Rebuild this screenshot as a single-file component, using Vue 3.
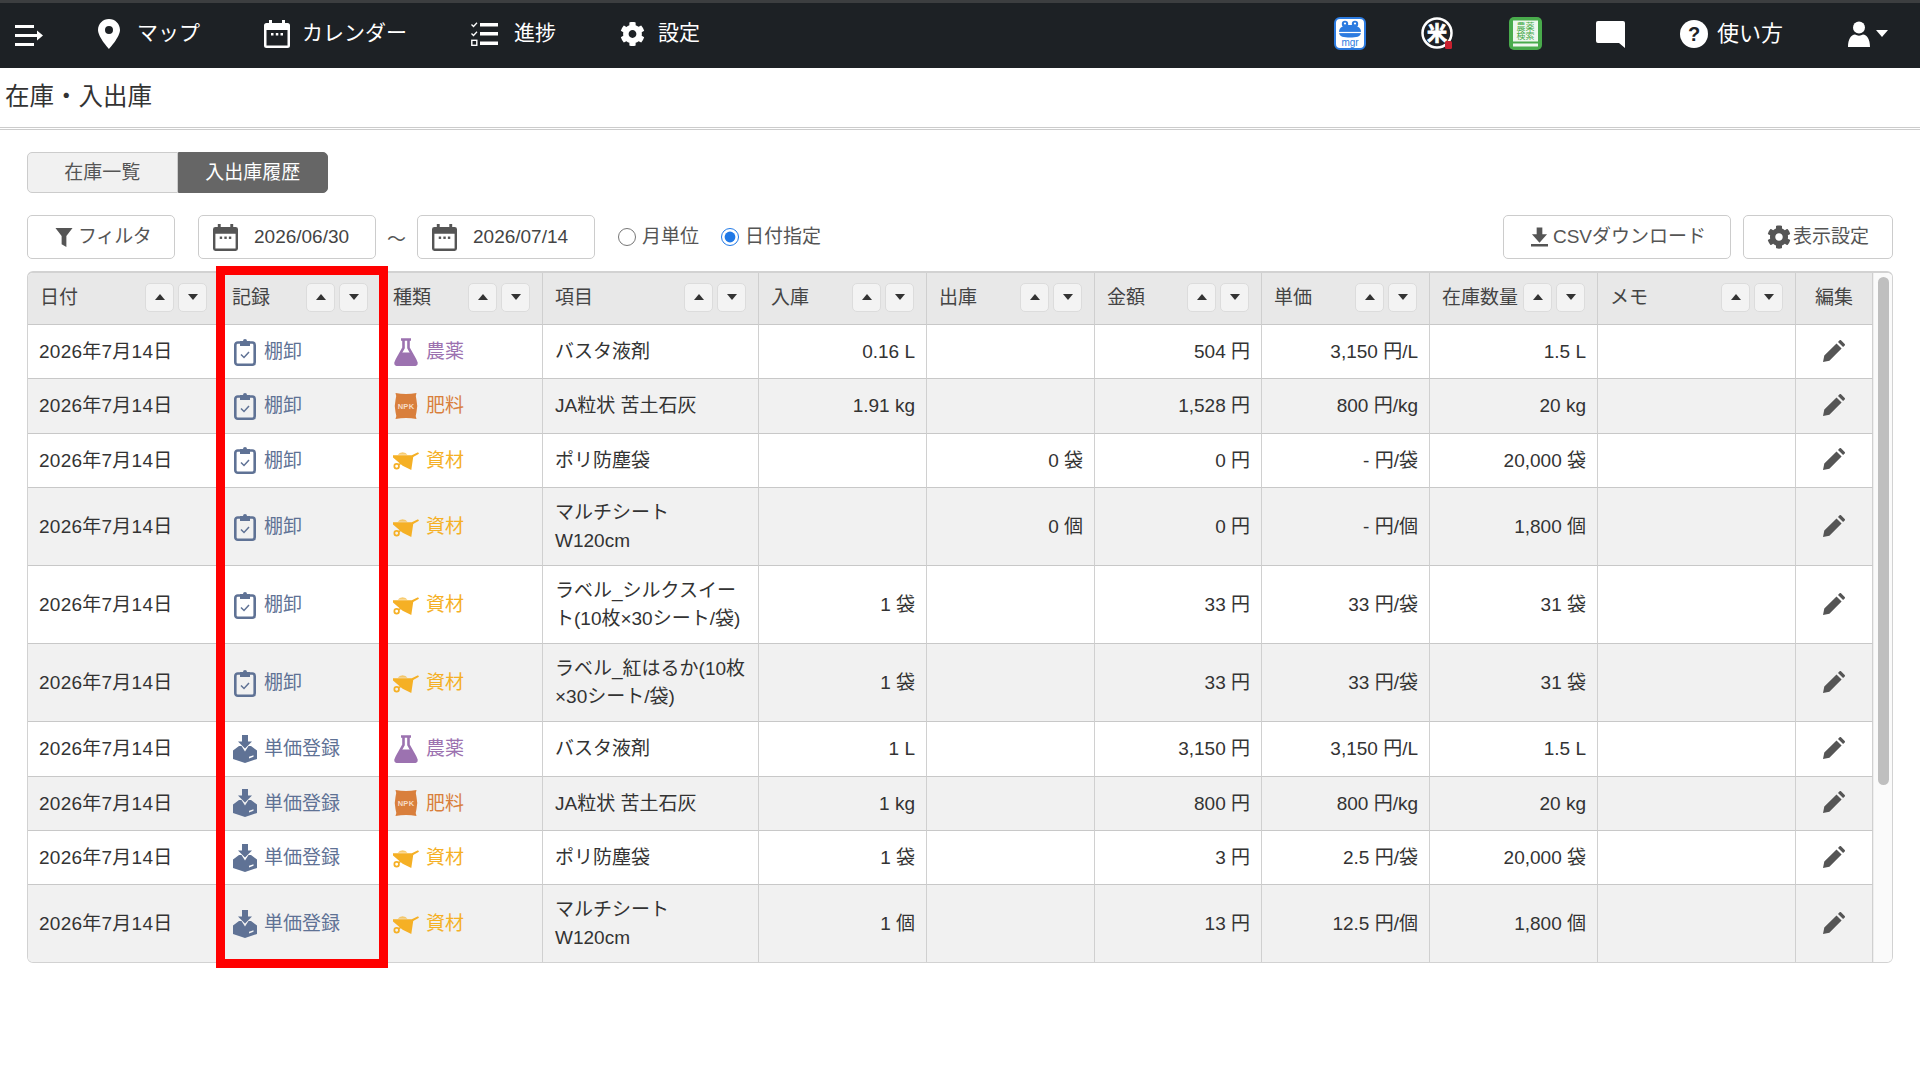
<template>
  <div class="page">
    <!-- shared icons -->
    <svg class="defs" aria-hidden="true">
      <symbol id="i-gear" viewBox="0 0 512 512">
        <path fill="currentColor" d="M487.4 315.7l-42.6-24.6c4.3-23.2 4.3-47 0-70.2l42.6-24.6c4.9-2.8 7.1-8.6 5.5-14-11.1-35.6-30-67.8-54.7-94.6-3.8-4.1-10-5.1-14.8-2.3L380.8 110c-17.9-15.4-38.5-27.3-60.8-35.1V25.8c0-5.6-3.9-10.5-9.4-11.7-36.7-8.2-74.3-7.8-109.2 0-5.5 1.2-9.4 6.1-9.4 11.7V75c-22.2 7.9-42.8 19.8-60.8 35.1L88.7 85.5c-4.9-2.8-11-1.9-14.8 2.3-24.7 26.7-43.6 58.9-54.7 94.6-1.7 5.4.6 11.2 5.5 14L67.3 221c-4.3 23.2-4.3 47 0 70.2l-42.6 24.6c-4.9 2.8-7.1 8.6-5.5 14 11.1 35.6 30 67.8 54.7 94.6 3.8 4.1 10 5.1 14.8 2.3l42.6-24.6c17.9 15.4 38.5 27.3 60.8 35.1v49.2c0 5.6 3.9 10.5 9.4 11.7 36.7 8.2 74.3 7.8 109.2 0 5.5-1.2 9.4-6.1 9.4-11.7v-49.2c22.2-7.9 42.8-19.8 60.8-35.1l42.6 24.6c4.9 2.8 11 1.9 14.8-2.3 24.7-26.7 43.6-58.9 54.7-94.6 1.5-5.5-.7-11.3-5.6-14.1zM256 336c-44.1 0-80-35.9-80-80s35.9-80 80-80 80 35.9 80 80-35.9 80-80 80z" />
      </symbol>
      <symbol id="i-cal" viewBox="0 0 26 28">
        <path fill="currentColor" d="M5 0h3v3h10V0h3v3h2.500A2.500 2.500 0 0 1 26 5.500V25.500A2.500 2.500 0 0 1 23.500 28H2.500A2.500 2.500 0 0 1 0 25.500V5.500A2.500 2.500 0 0 1 2.500 3H5zM2.500 10v15.500h21V10z" fill-rule="evenodd" />
        <rect fill="currentColor" x="7" y="13" width="2.500" height="2.500" />
        <rect fill="currentColor" x="11.800" y="13" width="2.500" height="2.500" />
        <rect fill="currentColor" x="16.500" y="13" width="2.500" height="2.500" />
      </symbol>
      <symbol id="i-clip" viewBox="0 0 22 28">
        <rect x="1.300" y="4.500" width="19.400" height="22.200" rx="2.500" fill="none" stroke="currentColor" stroke-width="2.600" />
        <path fill="currentColor" d="M6 3h3a2 2 0 0 1 4 0h3v5H6z" />
        <path d="M7 16.500l3 3 5-5.500" fill="none" stroke="currentColor" stroke-width="1.500" />
      </symbol>
      <symbol id="i-inbox" viewBox="0 0 24 28">
        <path fill="currentColor" d="M9 0h6v6.500h4L12 13.500 5 6.500h4z" />
        <path fill="currentColor" fill-rule="evenodd" d="M0 15.500L6 11h2.500L12 16.500 15.500 11H18l6 4.500V24l-12 4-12-4zM16 21.800l4.500-1.600v1.600L16 23.400z" />
      </symbol>
      <symbol id="i-flask" viewBox="0 0 24 28">
        <path d="M7 1.500h10M9.500 1.500V10L2.500 22.500A2.500 2.500 0 0 0 4.700 26.500H19.300A2.500 2.500 0 0 0 21.500 22.500L14.500 10V1.500" fill="none" stroke="currentColor" stroke-width="2.600" />
        <path fill="currentColor" d="M7.500 14.500h9l7 10a2.500 2.500 0 0 1-2 3.500H2.500a2.500 2.500 0 0 1-2-3.500z" />
      </symbol>
      <symbol id="i-bag" viewBox="0 0 23 28">
        <path fill="currentColor" d="M1 1Q11.500 3 22 1Q20.500 4 22 8Q23.500 14 22 20Q20.500 24 22 27Q11.500 25 1 27Q2.500 24 1 20Q-.5 14 1 8Q2.500 4 1 1z" />
        <text x="11.500" y="16.500" text-anchor="middle" class="npk">NPK</text>
      </symbol>
      <symbol id="i-barrow" viewBox="0 0 27 21">
        <path fill="currentColor" d="M0 5.500H19.500L26 2.500l1 1.500-6 3.500L19 21 10 16.500 0 8z" />
        <path fill="currentColor" opacity=".65" d="M5 5a5.500 4.500 0 0 1 10 0z" />
        <circle cx="3.800" cy="17" r="2.400" fill="none" stroke="currentColor" stroke-width="1.800" />
        <path d="M5.500 15.500l4.500-2.500" stroke="currentColor" stroke-width="1.600" />
      </symbol>
      <symbol id="i-pencil" viewBox="0 0 22 22">
        <path fill="currentColor" d="M0 22l1.300-6.400L13.500 3.400l5.100 5.100L6.400 20.700zM15 1.900L16.600.3a1 1 0 0 1 1.400 0l3.700 3.700a1 1 0 0 1 0 1.400L20.100 7z" />
      </symbol>
    </svg>

    <header class="navbar">
      <div class="nav-left">
        <svg class="hamburger" width="28" height="22" viewBox="0 0 28 22">
          <path fill="#fff" d="M0 0h19v3H0zM0 9h22V5.500L28 10.500 22 15.500V12H0zM0 18h19v3H0z" />
        </svg>
        <a v-for="item in navItems" :key="item.label" class="nav-item" :class="item.icon">
          <svg v-if="item.icon === 'pin'" width="22" height="30" viewBox="0 0 22 30">
            <path fill="#fff" fill-rule="evenodd" d="M11 0C4.900 0 0 4.900 0 11c0 7 11 19 11 19s11-12 11-19C22 4.900 17.100 0 11 0zm0 7a4 4 0 1 1 0 8 4 4 0 0 1 0-8z" />
          </svg>
          <svg v-else-if="item.icon === 'cal'" width="26" height="28"><use href="#i-cal" /></svg>
          <svg v-else-if="item.icon === 'list'" width="27" height="24" viewBox="0 0 27 24">
            <path fill="#fff" d="M9 1h18v3.500H9zM9 10h18v3.500H9zM9 19.500h18V23H9z" />
            <path d="M.5 2.500l2 2L6 .8M.5 11.500l2 2L6 9.800" fill="none" stroke="#fff" stroke-width="1.300" />
            <rect x=".8" y="18.300" width="5" height="5" fill="none" stroke="#fff" stroke-width="1.400" />
          </svg>
          <svg v-else width="25" height="26" class="gear-w"><use href="#i-gear" /></svg>
          <span>{{ item.label }}</span>
        </a>
      </div>

      <div class="nav-right">
        <svg class="app-mgr" width="32" height="33" viewBox="0 0 32 33">
          <rect x="1" y="1" width="30" height="31" rx="5" fill="#fff" stroke="#2c7be0" stroke-width="2" />
          <circle cx="11" cy="7" r="3.200" fill="#2c7be0" />
          <circle cx="21" cy="7" r="3.200" fill="#2c7be0" />
          <circle cx="11" cy="6.500" r="1.100" fill="#fff" />
          <circle cx="21" cy="6.500" r="1.100" fill="#fff" />
          <path fill="#2c7be0" d="M5 15c0-5 5-7 11-7s11 2 11 7-5 5.500-11 5.500S5 20 5 15z" />
          <path stroke="#fff" stroke-width="1.200" d="M5 15.500h22" />
          <text x="16" y="29" text-anchor="middle" class="mgr-text">mgr</text>
        </svg>
        <svg class="app-kome" width="33" height="33" viewBox="0 0 33 33">
          <circle cx="16" cy="16" r="14.500" fill="#1d2125" stroke="#fff" stroke-width="2.500" />
          <text x="16" y="23.500" text-anchor="middle" class="kome-text">米</text>
          <rect x="24" y="24" width="7" height="8" rx="1.500" fill="#c8202f" />
        </svg>
        <svg class="app-book" width="33" height="33" viewBox="0 0 33 33">
          <rect width="33" height="33" rx="5" fill="#49ab4c" />
          <rect x="4" y="3.500" width="25" height="21" fill="#eef7ee" />
          <rect x="4" y="26.500" width="25" height="3" fill="#eef7ee" />
          <text x="16.500" y="12.500" text-anchor="middle" class="book-text">農薬</text>
          <text x="16.500" y="22" text-anchor="middle" class="book-text">検索</text>
        </svg>
        <svg class="app-chat" width="29" height="28" viewBox="0 0 29 28">
          <path fill="#fff" d="M2 1h25a2 2 0 0 1 2 2v25l-6-5H2a2 2 0 0 1-2-2V3a2 2 0 0 1 2-2z" />
        </svg>
        <a class="help">
          <svg width="28" height="28" viewBox="0 0 28 28">
            <circle cx="14" cy="14" r="14" fill="#fff" />
            <text x="14" y="21" text-anchor="middle" class="q-text">?</text>
          </svg>
          <span>使い方</span>
        </a>
        <div class="user">
          <svg width="22" height="26" viewBox="0 0 22 26">
            <circle cx="11" cy="6.500" r="6" fill="#fff" />
            <path fill="#fff" d="M0 26c0-8 3-12 7-12.500 2.500 1.500 5.500 1.500 8 0 4 .5 7 4.500 7 12.500z" />
          </svg>
          <span class="caret"></span>
        </div>
      </div>
    </header>

    <div class="title-bar">在庫・入出庫</div>

    <main class="content">
      <div class="tabs">
        <button class="tab"><span>在庫一覧</span></button>
        <button class="tab active"><span>入出庫履歴</span></button>
      </div>

      <div class="toolbar">
        <button class="btn filter">
          <svg width="18" height="19" viewBox="0 0 18 20"><path fill="#555" d="M0 0h18l-6.500 8.500V20l-5-3V8.500z" /></svg>
          <span>フィルタ</span>
        </button>
        <div class="date">
          <svg width="25" height="27" class="cal-g"><use href="#i-cal" /></svg>
          <span>2026/06/30</span>
        </div>
        <span class="tilde">〜</span>
        <div class="date">
          <svg width="25" height="27" class="cal-g"><use href="#i-cal" /></svg>
          <span>2026/07/14</span>
        </div>
        <label class="radio first"><input type="radio" name="unit" /><span>月単位</span></label>
        <label class="radio"><input type="radio" name="unit" checked /><span>日付指定</span></label>
        <div class="toolbar-right">
          <button class="btn csv">
            <svg width="17" height="20" viewBox="0 0 18 20">
              <path fill="#555" d="M6 0h6v7h5l-8 9-8-9h5zM0 17.500h18V20H0z" />
            </svg>
            <span>CSVダウンロード</span>
          </button>
          <button class="btn view">
            <svg width="24" height="26" class="cal-g"><use href="#i-gear" /></svg>
            <span>表示設定</span>
          </button>
        </div>
      </div>

      <div class="table-area">
        <div class="table-wrap">
          <table class="stock">
            <colgroup>
              <col v-for="c in columns" :key="c.label" :width="c.width" />
            </colgroup>
            <thead>
              <tr>
                <th v-for="c in columns" :key="c.label" :class="{ center: !c.sort }">
                  <div class="th-in">
                    <span class="th-label">{{ c.label }}</span>
                    <span v-if="c.sort" class="sorts">
                      <button class="sort"><i class="tri up"></i></button>
                      <button class="sort"><i class="tri down"></i></button>
                    </span>
                  </div>
                </th>
              </tr>
            </thead>
            <tbody>
              <tr v-for="(r, i) in rows" :key="i" :class="{ tall: r.name.includes('\n') }">
                <td class="day">2026年7月14日</td>
                <td>
                  <a class="rec">
                    <svg width="24" height="28"><use :href="r.rec === '棚卸' ? '#i-clip' : '#i-inbox'" /></svg>
                    {{ r.rec }}
                  </a>
                </td>
                <td>
                  <span class="kind" :class="kinds[r.kind].cls">
                    <svg width="26" height="28"><use :href="kinds[r.kind].icon" /></svg>
                    {{ r.kind }}
                  </span>
                </td>
                <td class="name">{{ r.name }}</td>
                <td class="num">{{ r.inn }}</td>
                <td class="num">{{ r.out }}</td>
                <td class="num">{{ r.amount }}</td>
                <td class="num">{{ r.unit }}</td>
                <td class="num">{{ r.stock }}</td>
                <td></td>
                <td class="edit"><svg width="22" height="22"><use href="#i-pencil" /></svg></td>
              </tr>
            </tbody>
          </table>
          <div class="scrollbar"><div class="thumb"></div></div>
        </div>
        <div class="highlight"></div>
      </div>
    </main>
  </div>
</template>

<script setup>
const navItems = [
  { icon: 'pin', label: 'マップ' },
  { icon: 'cal', label: 'カレンダー' },
  { icon: 'list', label: '進捗' },
  { icon: 'gear', label: '設定' },
]

const columns = [
  { label: '日付', width: 192, sort: true },
  { label: '記録', width: 161, sort: true },
  { label: '種類', width: 162, sort: true },
  { label: '項目', width: 216, sort: true },
  { label: '入庫', width: 168, sort: true },
  { label: '出庫', width: 168, sort: true },
  { label: '金額', width: 167, sort: true },
  { label: '単価', width: 168, sort: true },
  { label: '在庫数量', width: 168, sort: true },
  { label: 'メモ', width: 198, sort: true },
  { label: '編集', width: 77, sort: false },
]

const kinds = {
  農薬: { cls: 'chem', icon: '#i-flask' },
  肥料: { cls: 'fert', icon: '#i-bag' },
  資材: { cls: 'mat', icon: '#i-barrow' },
}

const rows = [
  { rec: '棚卸', kind: '農薬', name: 'バスタ液剤', inn: '0.16 L', out: '', amount: '504 円', unit: '3,150 円/L', stock: '1.5 L' },
  { rec: '棚卸', kind: '肥料', name: 'JA粒状 苦土石灰', inn: '1.91 kg', out: '', amount: '1,528 円', unit: '800 円/kg', stock: '20 kg' },
  { rec: '棚卸', kind: '資材', name: 'ポリ防塵袋', inn: '', out: '0 袋', amount: '0 円', unit: '- 円/袋', stock: '20,000 袋' },
  { rec: '棚卸', kind: '資材', name: 'マルチシート\nW120cm', inn: '', out: '0 個', amount: '0 円', unit: '- 円/個', stock: '1,800 個' },
  { rec: '棚卸', kind: '資材', name: 'ラベル_シルクスイー\nト(10枚×30シート/袋)', inn: '1 袋', out: '', amount: '33 円', unit: '33 円/袋', stock: '31 袋' },
  { rec: '棚卸', kind: '資材', name: 'ラベル_紅はるか(10枚\n×30シート/袋)', inn: '1 袋', out: '', amount: '33 円', unit: '33 円/袋', stock: '31 袋' },
  { rec: '単価登録', kind: '農薬', name: 'バスタ液剤', inn: '1 L', out: '', amount: '3,150 円', unit: '3,150 円/L', stock: '1.5 L' },
  { rec: '単価登録', kind: '肥料', name: 'JA粒状 苦土石灰', inn: '1 kg', out: '', amount: '800 円', unit: '800 円/kg', stock: '20 kg' },
  { rec: '単価登録', kind: '資材', name: 'ポリ防塵袋', inn: '1 袋', out: '', amount: '3 円', unit: '2.5 円/袋', stock: '20,000 袋' },
  { rec: '単価登録', kind: '資材', name: 'マルチシート\nW120cm', inn: '1 個', out: '', amount: '13 円', unit: '12.5 円/個', stock: '1,800 個' },
]
</script>

<style>
html, body { background: #fff; }
</style>

<style scoped>
.page {
  font-family: "Liberation Sans", "Noto Sans CJK JP", sans-serif;
  font-size: 19px;
  color: #333;
  height: 1080px;
}
.defs { display: none; }
.npk { font: bold 7.5px "Liberation Sans", sans-serif; fill: #f6dcc6; letter-spacing: .3px; }

/* nav */
.navbar {
  height: 68px;
  box-sizing: border-box;
  border-top: 3px solid #3c3e40;
  background: #1d2125;
  display: flex;
  align-items: center;
  justify-content: space-between;
  padding: 0 32px 4px 15px;
  color: #fff;
  font-size: 21px;
}
.nav-left { display: flex; align-items: center; gap: 64px; }
.hamburger { margin-right: -9px; margin-top: 4px; }
.nav-item { display: flex; align-items: center; gap: 16px; }
.nav-item.pin { gap: 17px; }
.nav-item.cal { gap: 12px; }
.nav-item.gear { gap: 13px; }
.nav-item span { margin-top: -6px; }
.gear-w { color: #fff; }
.nav-right { display: flex; align-items: center; gap: 55px; }
.app-book { margin-right: -1px; }
.help { display: flex; align-items: center; gap: 9px; margin-right: 10px; }
.help span { margin-top: -6px; font-size: 22px; }
.q-text { font: bold 20px "Liberation Sans", sans-serif; fill: #1d2125; }
.mgr-text { font: 10px "Liberation Sans", sans-serif; fill: #2c7be0; }
.kome-text { font: bold 20px "Noto Sans CJK JP", sans-serif; fill: #fff; stroke: #fff; stroke-width: .8px; }
.book-text { font: 9px "Noto Sans CJK JP", sans-serif; fill: #49ab4c; }
.user { display: flex; align-items: center; gap: 6px; }
.caret { border-left: 6px solid transparent; border-right: 6px solid transparent; border-top: 7px solid #fff; }

/* title */
.title-bar {
  height: 59px;
  box-sizing: border-box;
  padding: 9px 0 0 5px;
  font-size: 24.500px;
  line-height: 40px;
  color: #333;
}
.content {
  border-top: 3px double #ccc;
  padding: 22px 27px 0;
}

/* tabs */
.tabs { display: flex; width: 301px; height: 41px; }
.tab {
  font: inherit;
  flex: 1;
  border: 1px solid #ccc;
  background: #f1f1f1;
  color: #555;
  padding: 0 0 4px;
  border-radius: 5px 0 0 5px;
}
.tab.active { background: #666; color: #fff; border-color: #666; border-radius: 0 5px 5px 0; }

/* toolbar */
.toolbar { display: flex; align-items: center; margin-top: 22px; height: 44px; }
.btn {
  font: inherit;
  color: #555;
  height: 44px;
  background: #fff;
  border: 1px solid #ccc;
  border-radius: 5px;
  display: flex;
  align-items: center;
  justify-content: center;
  padding: 0;
}
.btn span { margin-bottom: 5px; }
.filter { width: 148px; gap: 5px; margin-right: 23px; padding-left: 4px; letter-spacing: -.6px; }
.date {
  width: 178px;
  height: 44px;
  box-sizing: border-box;
  border: 1px solid #ccc;
  border-radius: 5px;
  display: flex;
  align-items: center;
  gap: 16px;
  padding-left: 14px;
  color: #444;
}
.cal-g { color: #555; }
.tilde { width: 41px; text-align: center; color: #555; }
.radio { display: flex; align-items: center; gap: 6px; color: #555; margin-left: 22px; }
.radio.first { margin-left: 23px; }
.radio span { margin-bottom: 5px; }
.radio input { margin: 0; width: 18px; height: 18px; accent-color: #1f78e6; }
.toolbar-right { margin-left: auto; display: flex; gap: 12px; }
.csv { width: 228px; gap: 5px; padding-left: 3px; }
.view { width: 150px; gap: 2px; }

/* table */
.table-area { position: relative; margin-top: 12px; }
.table-wrap {
  display: flex;
  border: 1px solid #d2d2d2;
  border-top-width: 2px;
  border-radius: 6px;
  overflow: hidden;
  height: 692px;
  box-sizing: border-box;
}
.stock {
  table-layout: fixed;
  width: 1845px;
  flex: none;
  border-collapse: separate;
  border-spacing: 0;
  align-self: flex-start;
}
.stock th {
  height: 52px;
  box-sizing: border-box;
  background: #e8e8e8;
  font-weight: normal;
  color: #444;
  text-align: left;
  padding: 0 12px 3px;
  border-right: 1px solid #cfcfcf;
  border-bottom: 1px solid #c8c8c8;
}
.stock th.center .th-in { justify-content: center; }
.stock th.center { padding: 0 0 3px; }
.th-in { display: flex; align-items: center; justify-content: space-between; }
.th-label { margin-bottom: 4px; }
.sorts { display: flex; gap: 4px; }
.sort {
  width: 29px;
  height: 29px;
  padding: 0;
  display: flex;
  align-items: center;
  justify-content: center;
  background: #f3f3f3;
  border: 1px solid #dcdcdc;
  border-radius: 5px;
}
.tri { border-left: 5.500px solid transparent; border-right: 5.500px solid transparent; }
.tri.up { border-bottom: 6px solid #333; }
.tri.down { border-top: 6px solid #333; }
.stock td {
  height: 54.400px;
  box-sizing: border-box;
  padding: 0 11px;
  line-height: 27.500px;
  border-right: 1px solid #d0d0d0;
  border-bottom: 1px solid #c8c8c8;
  color: #333;
}
.stock tr.tall td { height: 78px; }
.stock tbody tr:nth-child(even) td { background: #f1f1f1; }
.stock td.day { letter-spacing: .25px; }
.stock td.name { white-space: pre-line; padding-left: 12px; }
.stock td.num { text-align: right; }
.stock td.edit { text-align: center; padding: 0; color: #555; }
.stock td.edit svg { display: block; margin: -2px auto 0; }
.rec { display: flex; align-items: center; gap: 7px; color: #5f7295; padding-left: 2px; }
.rec svg { flex: none; }
.kind { display: flex; align-items: center; gap: 7px; padding-left: 1px; }
.chem { color: #9c72b0; }
.fert { color: #d97f3c; }
.mat { color: #f5b025; }
.scrollbar { flex: 1; background: #fafafa; border-left: 1px solid #eee; }
.thumb { width: 11px; height: 508px; margin: 4px 0 0 4px; background: #bfbfbf; border-radius: 6px; }

.highlight {
  position: absolute;
  left: 189px;
  top: -5px;
  width: 172px;
  height: 702px;
  box-sizing: border-box;
  border: 9px solid #f00;
  pointer-events: none;
}
</style>
